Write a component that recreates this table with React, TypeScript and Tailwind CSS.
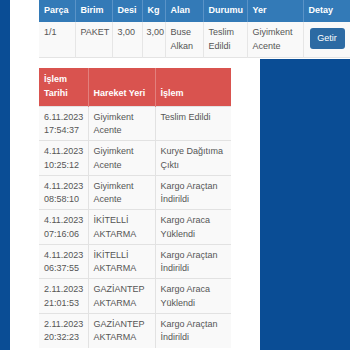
const parcaCols = [
  { label: 'Parça', w: 'w-[36px]' },
  { label: 'Birim', w: 'w-[37px]' },
  { label: 'Desi', w: 'w-[30px]' },
  { label: 'Kg', w: 'w-[23px]' },
  { label: 'Alan', w: 'w-[38px]' },
  { label: 'Durumu', w: 'w-[44px]' },
  { label: 'Yer', w: 'w-[56px]' },
  { label: 'Detay', w: 'w-[50px]' },
]

const hareketler = [
  { tarih: '6.11.2023', saat: '17:54:37', yer: ['Giyimkent', 'Acente'], islem: ['Teslim Edildi'] },
  { tarih: '4.11.2023', saat: '10:25:12', yer: ['Giyimkent', 'Acente'], islem: ['Kurye Dağıtıma', 'Çıktı'] },
  { tarih: '4.11.2023', saat: '08:58:10', yer: ['Giyimkent', 'Acente'], islem: ['Kargo Araçtan', 'İndirildi'] },
  { tarih: '4.11.2023', saat: '07:16:06', yer: ['İKİTELLİ', 'AKTARMA'], islem: ['Kargo Araca', 'Yüklendi'] },
  { tarih: '4.11.2023', saat: '06:37:55', yer: ['İKİTELLİ', 'AKTARMA'], islem: ['Kargo Araçtan', 'İndirildi'] },
  { tarih: '2.11.2023', saat: '21:01:53', yer: ['GAZİANTEP', 'AKTARMA'], islem: ['Kargo Araca', 'Yüklendi'] },
  { tarih: '2.11.2023', saat: '20:32:23', yer: ['GAZİANTEP', 'AKTARMA'], islem: ['Kargo Araçtan', 'İndirildi'] },
]

function Lines({ items }: { items: string[] }) {
  return (
    <>
      {items.map((t, i) => (
        <div key={i}>{t}</div>
      ))}
    </>
  )
}

export default function App() {
  return (
    <div
      className="w-[350px] h-[350px] overflow-hidden bg-[#0a4d95] pl-[10px] text-[9px] leading-[13.5px] text-[#555]"
      style={{ fontFamily: '"Liberation Sans", Arial, sans-serif' }}
    >
      <div className="bg-white pl-[29px] h-[59px]">
        <table className="table-fixed border-collapse w-[314px]">
          <thead>
            <tr className="bg-[#337ab7] text-white h-[22px]">
              {parcaCols.map((c) => (
                <th
                  key={c.label}
                  className={`${c.w} text-left font-bold px-[5px] border-r border-[#5a93c7] last:border-r-0`}
                >
                  {c.label}
                </th>
              ))}
            </tr>
          </thead>
          <tbody>
            <tr className="bg-[#f9f9f9] h-[35px] align-top border-b border-[#e4e4e4]">
              <td className="px-[5px] pt-[4px] border-r border-[#e6e6e6]">1/1</td>
              <td className="px-[5px] pt-[4px] border-r border-[#e6e6e6]">PAKET</td>
              <td className="px-[5px] pt-[4px] border-r border-[#e6e6e6]">3,00</td>
              <td className="px-[4px] pt-[4px] border-r border-[#e6e6e6]">3,00</td>
              <td className="px-[5px] pt-[4px] border-r border-[#e6e6e6]">
                <Lines items={['Buse', 'Alkan']} />
              </td>
              <td className="px-[5px] pt-[4px] border-r border-[#e6e6e6]">
                <Lines items={['Teslim', 'Edildi']} />
              </td>
              <td className="px-[5px] pt-[4px] border-r border-[#e6e6e6]">
                <Lines items={['Giyimkent', 'Acente']} />
              </td>
              <td className="pl-[6px] pt-[6px]">
                <button className="bg-[#2c6aa3] text-white rounded-[3px] w-[35px] h-[21px] text-[9px]">
                  Getir
                </button>
              </td>
            </tr>
          </tbody>
        </table>
      </div>

      <div className="flex">
        <div className="bg-white w-[250px] h-[300px] pl-[29px] pt-[9px]">
          <table className="table-fixed border-collapse w-[192px]">
            <thead>
              <tr className="bg-[#d9534f] text-white h-[38px]">
                <th className="w-[49px] text-left font-bold px-[5px] border-r border-[#e2807d]">
                  <div>İşlem</div>
                  <div>Tarihi</div>
                </th>
                <th className="w-[67px] text-left font-bold px-[5px] align-bottom pb-[5px] border-r border-[#e2807d]">
                  Hareket Yeri
                </th>
                <th className="w-[76px] text-left font-bold px-[5px] align-bottom pb-[5px]">
                  İşlem
                </th>
              </tr>
            </thead>
            <tbody>
              {hareketler.map((h, i) => (
                <tr key={i} className="bg-[#f9f9f9] h-[34.5px] align-top border-t border-[#e2e2e2]">
                  <td className="px-[5px] pt-[4px] border-r border-[#e2e2e2]">
                    <Lines items={[h.tarih, h.saat]} />
                  </td>
                  <td className="px-[5px] pt-[4px] border-r border-[#e2e2e2]">
                    <Lines items={h.yer} />
                  </td>
                  <td className="px-[5px] pt-[4px]">
                    <Lines items={h.islem} />
                  </td>
                </tr>
              ))}
            </tbody>
          </table>
        </div>
        <div className="flex-1" />
      </div>
    </div>
  )
}
